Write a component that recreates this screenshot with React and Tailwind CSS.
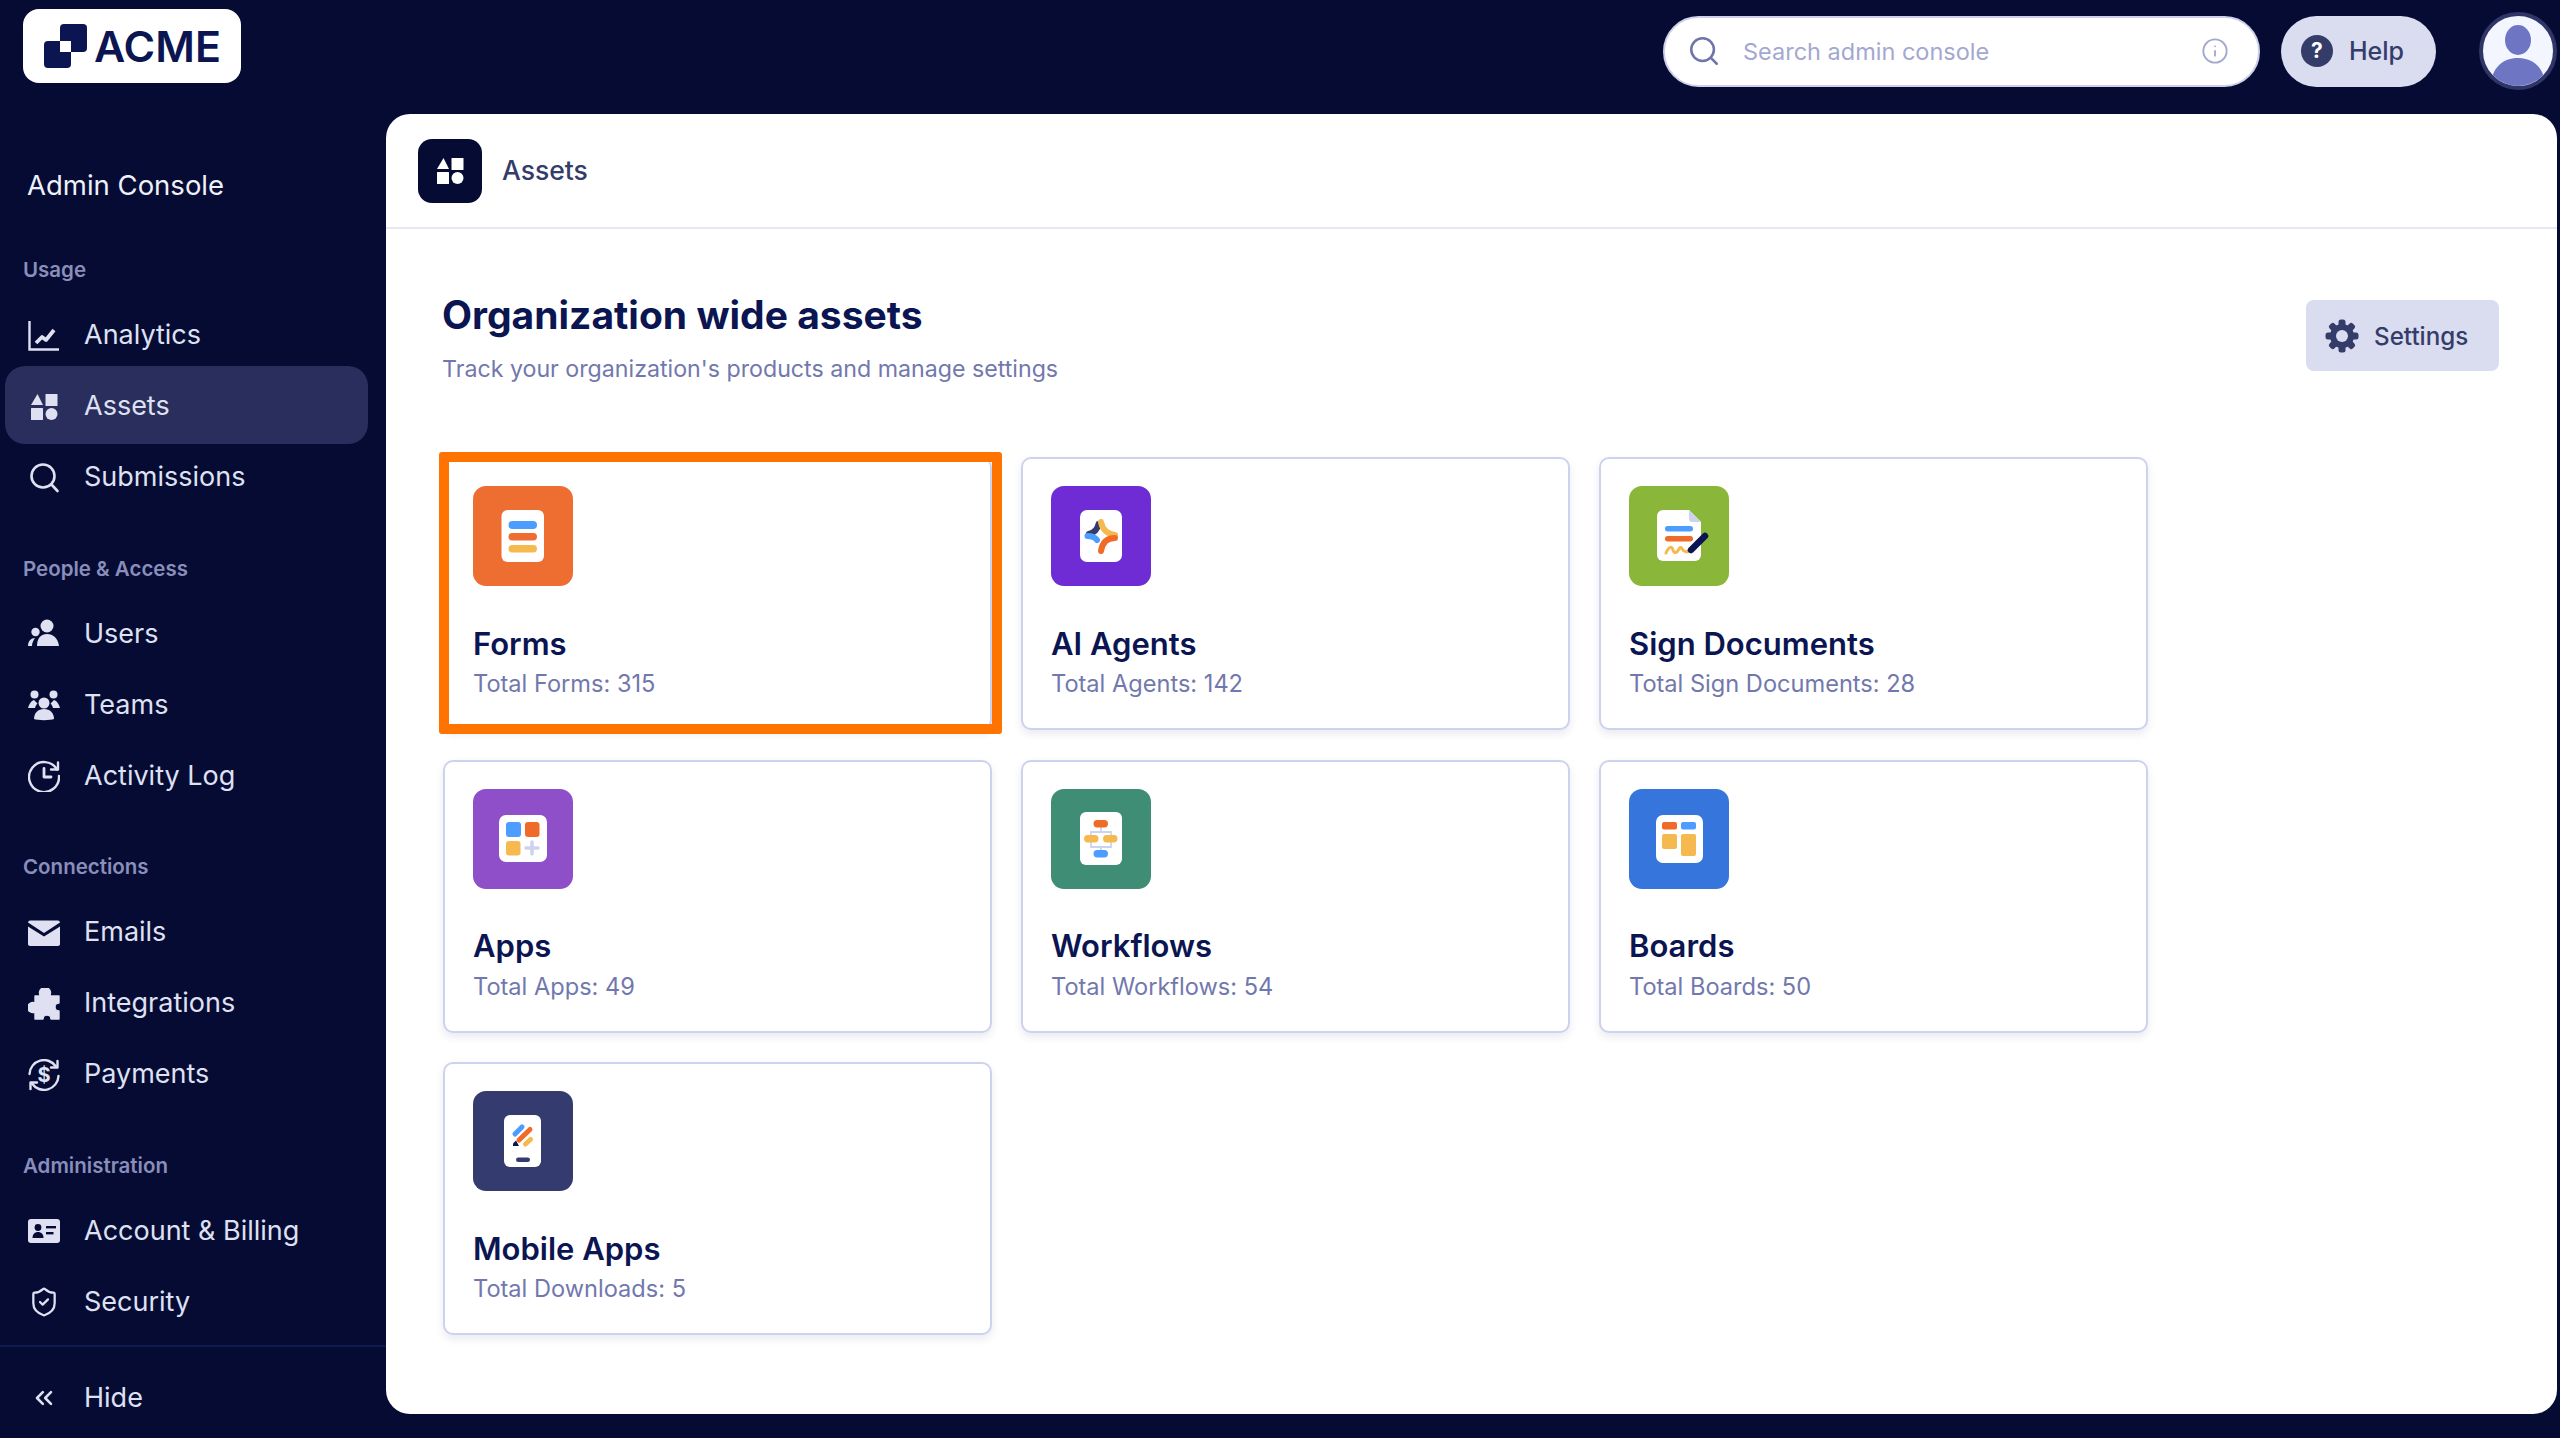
import React from 'react';
import { ChevronsLeft, Info, Search, ShieldCheck } from 'lucide-react';

const AnalyticsIcon = () => (
  <svg viewBox="0 0 32 32" className="w-8 h-8" fill="none" stroke="#dfe1f2">
    <path d="M1.500 1v28.500H31" strokeWidth="2.400" />
    <path d="M8 23l6-6 4 3 8-10" strokeWidth="3.800" strokeLinejoin="round" />
  </svg>
);

const AssetsIcon = ({ color = '#dfe1f2' }) => (
  <svg viewBox="0 0 32 32" className="w-8 h-8" fill={color}>
    <path d="M9.500 3L15 14H3z" />
    <rect x="17.500" y="3" width="12" height="12" rx="0.500" />
    <rect x="3" y="17" width="12" height="12" rx="0.500" />
    <circle cx="23.500" cy="23" r="6" />
  </svg>
);

const SubmissionsIcon = () => (
  <svg viewBox="0 0 32 32" className="w-8 h-8" fill="none" stroke="#dfe1f2" strokeWidth="2.600" strokeLinecap="round">
    <circle cx="15" cy="14" r="11.500" />
    <path d="M23.500 22.500L29.500 29" />
  </svg>
);

const UsersIcon = () => (
  <svg viewBox="0 0 32 32" className="w-8 h-8" fill="#dfe1f2">
    <circle cx="19" cy="8" r="6.500" />
    <path d="M9 28c0-8 4-12 10-12s11 4 12 12z" />
    <circle cx="7.500" cy="14" r="4.200" />
    <path d="M0 28c0-5 3-8 7-8-1.500 2-3 5-3 8z" />
  </svg>
);

const TeamsIcon = () => (
  <svg viewBox="0 0 32 32" className="w-8 h-8" fill="#dfe1f2">
    <circle cx="6.500" cy="5.500" r="4" />
    <circle cx="25.500" cy="5.500" r="4" />
    <circle cx="16" cy="14" r="5.500" />
    <path d="M6 11c-3 1-5 4-6 8h7c.500-2 1.500-3.500 2.500-4.500z" />
    <path d="M26 11c3 1 5 4 6 8h-7c-.500-2-1.500-3.500-2.500-4.500z" />
    <path d="M6 30c0-6 4-10 10-10s10 4 10 10c-3 1.500-17 1.500-20 0z" />
  </svg>
);

const ActivityIcon = () => (
  <svg viewBox="0 0 32 32" className="w-8 h-8" fill="none" stroke="#dfe1f2" strokeWidth="2.400" strokeLinecap="round" strokeLinejoin="round">
    <path d="M29 9.500A15 15 0 1 0 31 16" />
    <path d="M30 2.500v7h-7" />
    <path d="M16 8.500V17h7" strokeWidth="2.800" />
  </svg>
);

const EmailIcon = () => (
  <svg viewBox="0 0 32 32" className="w-8 h-8" fill="#dfe1f2">
    <path d="M0 5.500C0 4.500 1 3.500 2 3.500h28c1 0 2 1 2 2L16 16z" />
    <path d="M0 9.500l16 10 16-10V27c0 1-1 2-2 2H2c-1 0-2-1-2-2z" />
  </svg>
);

const PuzzleIcon = () => (
  <svg viewBox="0 0 32 32" className="w-8 h-8" fill="#dfe1f2" stroke="#dfe1f2" strokeWidth="1.400" strokeLinejoin="round">
    <path d="M7 8H12.500A5.500 5.500 0 1 1 21.500 8H31V15A4 4 0 0 0 31 23V31H23A4 4 0 0 0 15 31H7V24A5 5 0 1 1 7 15Z" />
  </svg>
);

const PaymentsIcon = () => (
  <svg viewBox="0 0 32 32" className="w-8 h-8" fill="none" stroke="#dfe1f2" strokeWidth="2.400" strokeLinecap="round" strokeLinejoin="round">
    <path d="M1.500 15A14.500 14.500 0 0 1 28 7.500" />
    <path d="M30.500 17A14.500 14.500 0 0 1 4 24.500" />
    <path d="M29.500 2v6.500H23" />
    <path d="M2.500 30v-6.500H9" />
    <text x="16" y="22.500" textAnchor="middle" fontSize="20" fontWeight="700" fontFamily="Inter, sans-serif" fill="#dfe1f2" stroke="none">$</text>
  </svg>
);

const BillingIcon = () => (
  <svg viewBox="0 0 32 32" className="w-8 h-8">
    <rect x="0" y="4" width="32" height="24" rx="3" fill="#dfe1f2" />
    <circle cx="10" cy="12.500" r="3.400" fill="#050b33" />
    <path d="M4.500 23c0-4 2.500-6 5.500-6s5.500 2 5.500 6z" fill="#050b33" />
    <rect x="18" y="11" width="10" height="2.400" fill="#050b33" />
    <rect x="18" y="17" width="7.500" height="2.400" fill="#050b33" />
  </svg>
);

const GearIcon = () => (
  <svg viewBox="0 0 34 34" className="w-[34px] h-[34px]" fill="#343c6a">
    <circle cx="17" cy="17" r="12" />
    {[0, 45, 90, 135, 180, 225, 270, 315].map((deg) => (
      <rect key={deg} x="13.500" y="0.500" width="7" height="8" rx="2.500" transform={`rotate(${deg} 17 17)`} />
    ))}
    <circle cx="17" cy="17" r="6" fill="#dadcef" />
  </svg>
);

const navGroups = [
  {
    label: 'Usage',
    items: [
      { name: 'Analytics', icon: <AnalyticsIcon /> },
      { name: 'Assets', icon: <AssetsIcon />, active: true },
      { name: 'Submissions', icon: <SubmissionsIcon /> },
    ],
  },
  {
    label: 'People & Access',
    items: [
      { name: 'Users', icon: <UsersIcon /> },
      { name: 'Teams', icon: <TeamsIcon /> },
      { name: 'Activity Log', icon: <ActivityIcon /> },
    ],
  },
  {
    label: 'Connections',
    items: [
      { name: 'Emails', icon: <EmailIcon /> },
      { name: 'Integrations', icon: <PuzzleIcon /> },
      { name: 'Payments', icon: <PaymentsIcon /> },
    ],
  },
  {
    label: 'Administration',
    items: [
      { name: 'Account & Billing', icon: <BillingIcon /> },
      { name: 'Security', icon: <ShieldCheck className="w-[34px] h-[34px] text-[#dfe1f2]" strokeWidth={1.7} /> },
    ],
  },
];

const NavRow = ({ name, icon, active }) => (
  <div
    className={
      active
        ? 'flex items-center h-[78px] -mt-[5px] -mb-[2px] pt-[3px] mx-[5px] w-[363px] pl-[23px] rounded-[20px] bg-[#2a2e5c]'
        : 'flex items-center h-[71px] pl-[28px]'
    }
  >
    <span className="flex items-center justify-center w-8 h-8 shrink-0">{icon}</span>
    <span className="ml-6 text-[27px] text-[#dfe1f2]">{name}</span>
  </div>
);

const Sidebar = () => (
  <aside className="flex flex-col w-[386px] shrink-0">
    <div className="flex items-center gap-[6px] ml-[23px] mt-[9px] w-[218px] h-[74px] pl-[21px] rounded-[16px] bg-white">
      <svg viewBox="0 0 44 44" className="w-[44px] h-[44px] shrink-0">
        <rect x="16" y="0" width="27" height="28" rx="4" fill="#0a1551" />
        <rect x="0" y="17" width="27" height="27" rx="4" fill="#0a1551" />
        <rect x="16" y="17" width="11" height="11" fill="#fff" />
      </svg>
      <span className="text-[43px] leading-none font-semibold text-[#0a1551]">ACME</span>
    </div>
    <div className="ml-[27px] mt-[84px] h-[36px] leading-[36px] text-[27.5px] text-[#eef0fa]">Admin Console</div>
    <nav className="mt-[52px] flex flex-col gap-[40.5px]">
      {navGroups.map((group) => (
        <div key={group.label}>
          <div className="ml-[23px] h-[30px] leading-[30px] mb-[15px] text-[20.5px] font-semibold text-[#8a8ebb]">{group.label}</div>
          {group.items.map((item) => (
            <NavRow key={item.name} {...item} />
          ))}
        </div>
      ))}
    </nav>
    <div className="mt-[7.5px] pt-[15.5px] border-t-2 border-[#0d1a4d]">
      <NavRow name="Hide" icon={<ChevronsLeft className="w-7 h-7 text-[#dfe1f2]" strokeWidth={2.2} />} />
    </div>
  </aside>
);

const TopBar = () => (
  <header className="flex items-center justify-end h-[114px] pb-[12px] shrink-0">
    <div className="flex items-center w-[597px] h-[71px] pl-[22px] pr-[29px] rounded-full bg-white border-2 border-[#cdd0e8]">
      <Search className="w-[34px] h-[34px] text-[#6f75a8]" strokeWidth={1.8} />
      <span className="ml-[22px] pt-[2px] flex-1 text-[23.5px] text-[#a3a8d0]">Search admin console</span>
      <Info className="w-[28px] h-[28px] text-[#a3a8d0]" strokeWidth={1.6} />
    </div>
    <div className="flex items-center w-[155px] h-[71px] ml-[21px] pl-[20px] rounded-full bg-[#dadcef]">
      <span className="flex items-center justify-center w-8 h-8 rounded-full bg-[#343c6a] text-[21px] font-bold text-white">?</span>
      <span className="ml-[16px] pt-[2px] text-[25px] font-medium text-[#343c6a]">Help</span>
    </div>
    <div className="flex items-center justify-center w-[78px] h-[78px] ml-[43px] mr-[3px] rounded-full overflow-hidden bg-[#f3f6fe] border-[4px] border-[#2f3566]">
      <svg viewBox="0 0 70 70" className="w-[70px] h-[70px]" fill="#6e76c4">
        <ellipse cx="35" cy="24" rx="13" ry="15" />
        <path d="M8 70c0-18 12-28 27-28s27 10 27 28z" />
      </svg>
    </div>
  </header>
);

const Tile = ({ bg, children }) => (
  <svg viewBox="0 0 100 100" className="block w-[100px] h-[100px]">
    <rect width="100" height="100" rx="13" fill={bg} />
    {children}
  </svg>
);

const FormsArt = () => (
  <Tile bg="#ee6e31">
    <rect x="28.500" y="24" width="42.500" height="52" rx="6" fill="#fff" />
    <rect x="35.500" y="35" width="28.500" height="8" rx="4" fill="#4c9dff" />
    <rect x="35.500" y="47" width="28.500" height="7.500" rx="3.700" fill="#ee6e31" />
    <rect x="35.500" y="59" width="28.500" height="7.500" rx="3.700" fill="#f5b94f" />
  </Tile>
);

const AgentsArt = () => (
  <Tile bg="#6f2bd4">
    <rect x="29" y="24" width="42" height="52" rx="7" fill="#fff" />
    <g fill="none" strokeWidth="6" strokeLinecap="round">
      <path d="M38 48Q46 46 47.500 38" stroke="#343c6a" />
      <path d="M36.500 50Q43 50 46 54" stroke="#4c9dff" />
      <path d="M50 36Q52 47 64 49" stroke="#f5b94f" />
      <path d="M64 52Q52 52 50 65" stroke="#f06a28" />
    </g>
    <path d="M50 47l3 3-3 3-3-3z" fill="#fff" />
  </Tile>
);

const SignArt = () => (
  <Tile bg="#8ab63a">
    <path d="M34 24h26l12 12v33a6 6 0 0 1-6 6H34a6 6 0 0 1-6-6V30a6 6 0 0 1 6-6z" fill="#fff" />
    <path d="M60 24l12 12h-9a3 3 0 0 1-3-3z" fill="#cdd3ee" />
    <rect x="36" y="40" width="28" height="5.500" rx="2.700" fill="#4c9dff" />
    <rect x="36" y="50" width="28" height="5.500" rx="2.700" fill="#f06a28" />
    <path d="M37 67c3-7 6-7 7-3s4 3 6-1 3 1 5 2 5 1 7 0" fill="none" stroke="#f5b94f" strokeWidth="3" strokeLinecap="round" />
    <path d="M62 64L76 50" stroke="#0a1551" strokeWidth="6.500" strokeLinecap="round" />
  </Tile>
);

const AppsArt = () => (
  <Tile bg="#8f4fc9">
    <rect x="26" y="26" width="48" height="47" rx="7" fill="#fff" />
    <rect x="33" y="33" width="15" height="15" rx="3" fill="#4c9dff" />
    <rect x="52" y="33" width="14.500" height="15" rx="3" fill="#f06a28" />
    <rect x="33" y="52" width="14.500" height="14.500" rx="3" fill="#f5b94f" />
    <path d="M59 53v12M53 59h12" stroke="#cdd3ee" strokeWidth="3.500" strokeLinecap="round" />
  </Tile>
);

const WorkflowsArt = () => (
  <Tile bg="#3f8d75">
    <rect x="29" y="23" width="42" height="53" rx="6" fill="#fff" />
    <path d="M50 38v5M40 50v-7h20v7M40 53v5h20v-5M50 58v3" fill="none" stroke="#cdd3ee" strokeWidth="1.800" />
    <rect x="42.500" y="31" width="14.500" height="7.500" rx="3.700" fill="#f06a28" />
    <rect x="33" y="46" width="14.500" height="7.500" rx="3.700" fill="#f5b94f" />
    <rect x="52" y="46" width="14.500" height="7.500" rx="3.700" fill="#f5b94f" />
    <rect x="42.500" y="61" width="14.500" height="7.500" rx="3.700" fill="#4c9dff" />
  </Tile>
);

const BoardsArt = () => (
  <Tile bg="#3675db">
    <rect x="27" y="26" width="47" height="48" rx="7" fill="#fff" />
    <rect x="33" y="33" width="15" height="7.500" rx="2" fill="#f06a28" />
    <rect x="52" y="33" width="15" height="7.500" rx="2" fill="#4c9dff" />
    <rect x="33" y="45" width="15" height="15" rx="2" fill="#f5b94f" />
    <rect x="52" y="45" width="15" height="22" rx="2" fill="#f5b94f" />
  </Tile>
);

const MobileArt = () => (
  <Tile bg="#343c6f">
    <rect x="31" y="24" width="37" height="52" rx="6" fill="#fff" />
    <rect x="43" y="66.500" width="14" height="4.500" rx="2.200" fill="#343c6f" />
    <g fill="none" strokeLinecap="round" strokeWidth="5">
      <path d="M42 43L49 36" stroke="#4c9dff" />
      <path d="M46 49L57 38.500" stroke="#f06a28" />
      <path d="M52.500 53L57.500 48.500" stroke="#f5b94f" />
    </g>
    <path d="M40 52.500l3-3 3 5.500h-6z" fill="#0a1551" />
  </Tile>
);

const assets = [
  { title: 'Forms', total: 'Total Forms: 315', art: <FormsArt />, highlight: true },
  { title: 'AI Agents', total: 'Total Agents: 142', art: <AgentsArt /> },
  { title: 'Sign Documents', total: 'Total Sign Documents: 28', art: <SignArt /> },
  { title: 'Apps', total: 'Total Apps: 49', art: <AppsArt /> },
  { title: 'Workflows', total: 'Total Workflows: 54', art: <WorkflowsArt /> },
  { title: 'Boards', total: 'Total Boards: 50', art: <BoardsArt /> },
  { title: 'Mobile Apps', total: 'Total Downloads: 5', art: <MobileArt /> },
];

const AssetCard = ({ title, total, art, highlight }) => (
  <div className="relative h-[273px] pl-[28px] pt-[27px] rounded-[10px] bg-white border-2 border-[#cdd3ee] shadow-[0_4px_8px_rgba(40,50,110,0.10)]">
    {art}
    <div className="mt-[37.5px] h-[40px] leading-[40px] text-[31px] font-semibold text-[#0a1551]">{title}</div>
    <div className="mt-[3.5px] h-[34px] leading-[34px] text-[23.6px] text-[#7278ad]">{total}</div>
    {highlight && (
      <div className="absolute -left-[6.5px] -top-[7px] -right-[11.5px] -bottom-[6px] rounded-[3px] border-[10px] border-[#ff7300]" />
    )}
  </div>
);

const App = () => (
  <div className="flex w-full h-[1438px] overflow-hidden bg-[#050b33] font-[Inter,sans-serif]">
    <Sidebar />
    <div className="flex flex-col flex-1 min-w-0">
      <TopBar />
      <main className="mr-[3px] mb-[24px] flex-1 rounded-[24px] bg-white">
        <div className="flex items-center h-[115px] pl-[32px] border-b-2 border-[#e6e8f5]">
          <span className="flex items-center justify-center w-[64px] h-[64px] rounded-[14px] bg-[#050b33]">
            <AssetsIcon color="#fff" />
          </span>
          <span className="ml-[20px] pt-[1px] text-[26.5px] font-medium text-[#343c6a]">Assets</span>
        </div>
        <div className="pl-[56px] pr-[58px]">
          <div className="flex justify-between pt-[62px]">
            <div>
              <h1 className="h-[48px] leading-[48px] text-[39px] font-bold text-[#0a1551]">Organization wide assets</h1>
              <p className="mt-[14px] h-[32px] leading-[32px] text-[23.2px] text-[#7278ad]">Track your organization's products and manage settings</p>
            </div>
            <button className="flex items-center gap-[15px] w-[193px] h-[71px] mt-[9px] pl-[19px] rounded-[8px] bg-[#dadcef]">
              <GearIcon />
              <span className="pt-[3px] text-[24.2px] font-medium text-[#343c6a]">Settings</span>
            </button>
          </div>
          <div className="grid grid-cols-[549px_549px_549px] gap-x-[29px] gap-y-[29.5px] ml-px mt-[72px]">
            {assets.map((asset) => (
              <AssetCard key={asset.title} {...asset} />
            ))}
          </div>
        </div>
      </main>
    </div>
  </div>
);

export default App;
